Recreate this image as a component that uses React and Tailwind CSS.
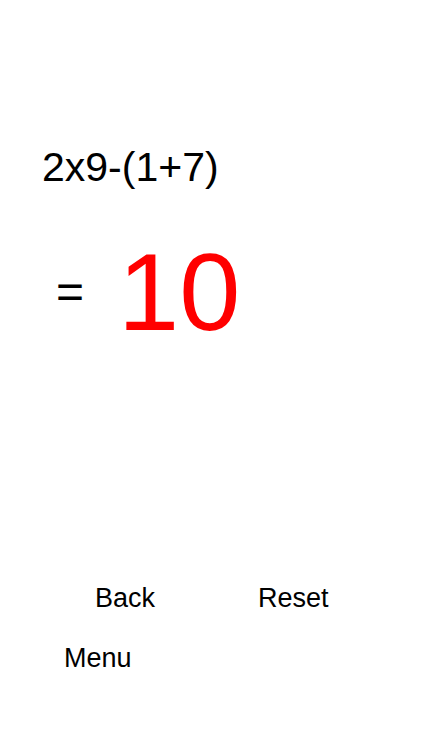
import React from "react";

const font = { fontFamily: '"Liberation Sans", Arial, sans-serif' };

export default function App() {
  return (
    <div
      className="min-h-screen w-full bg-white text-black flex flex-col"
      style={font}
    >
      <p className="pt-[147px] pl-[42px] text-[41px] leading-none">2x9-(1+7)</p>

      <div className="mt-[49px] pl-[56px] flex items-center gap-[34px]">
        <span className="text-[48px] leading-none">=</span>
        <span className="text-[110px] leading-none text-[#ff0000]">10</span>
      </div>

      <div className="mt-[238px] pl-[95px] flex items-start gap-[103px]">
        <button className="text-[27px] leading-none cursor-pointer">Back</button>
        <button className="text-[27px] leading-none cursor-pointer">Reset</button>
      </div>

      <div className="mt-[33px] pl-[64px] flex">
        <button className="text-[27px] leading-none cursor-pointer">Menu</button>
      </div>
    </div>
  );
}
